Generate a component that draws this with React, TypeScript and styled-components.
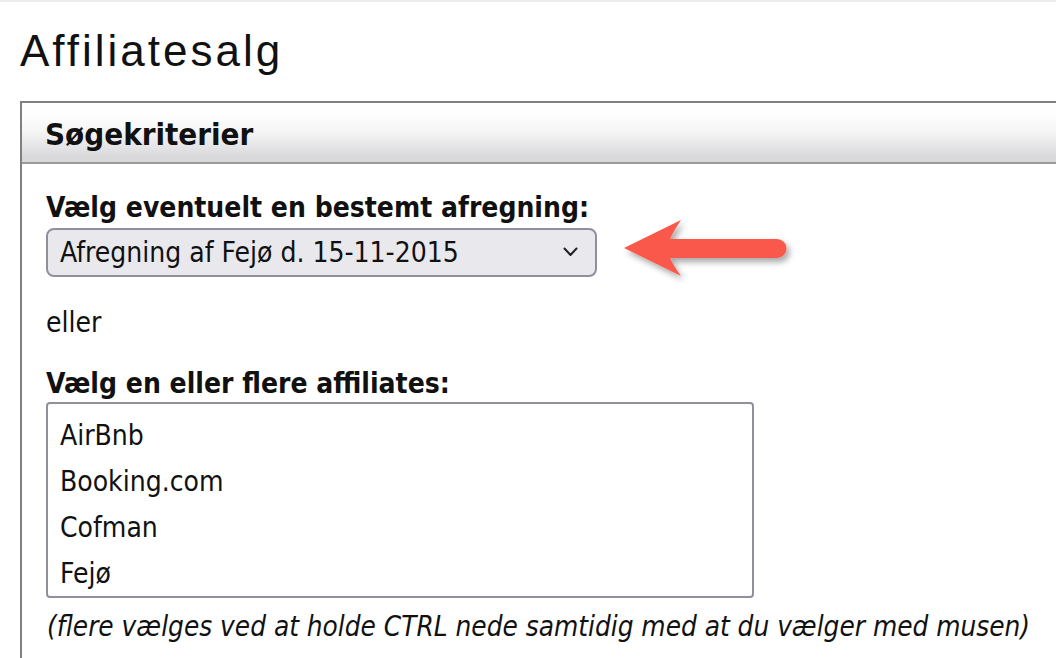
import React from 'react';
import styled, { createGlobalStyle } from 'styled-components';

const GlobalStyle = createGlobalStyle`
	html, body {
		margin: 0;
		padding: 0;
		background: #ffffff;
		overflow: hidden;
	}
	body {
		font-family: 'DejaVu Sans', Verdana, sans-serif;
		font-stretch: condensed;
		color: #111111;
	}
`;

const Page = styled.div`
	width: 1056px;
	height: 658px;
	border-top: 2px solid #ececec;
	box-sizing: border-box;
	padding-left: 20px;
	overflow: hidden;
`;

const Title = styled.h1`
	margin: 0;
	padding-top: 21px;
	height: 78px;
	font-family: 'Liberation Sans', Arial, sans-serif;
	font-stretch: normal;
	font-weight: 400;
	font-size: 44px;
	line-height: 56px;
	letter-spacing: 3px;
	color: #111111;
`;

const Panel = styled.section`
	width: 1100px;
	border-top: 2px solid #808080;
	border-left: 2px solid #808080;
`;

const PanelHeader = styled.div`
	height: 59px;
	border-bottom: 2px solid #9a9a9a;
	background: linear-gradient(
		to bottom,
		#ffffff 0%,
		#fdfdfd 25%,
		#f4f4f4 50%,
		#e4e4e6 75%,
		#d8d8da 92%,
		#d8d8da 100%
	);
	display: flex;
	align-items: center;
	padding-left: 23px;

	h2 {
		margin: 0;
		font-size: 31px;
		font-weight: 700;
		line-height: 34px;
		padding-top: 3px;
		color: #111111;
	}
`;

const PanelBody = styled.div`
	padding: 30px 0 40px 24px;
	display: flex;
	flex-direction: column;
	align-items: flex-start;
`;

const Label = styled.div<{ $gap: number }>`
	font-size: 28px;
	font-weight: 700;
	line-height: 28px;
	margin-bottom: ${({ $gap }) => $gap}px;
`;

const Row = styled.div`
	display: flex;
	align-items: center;
	gap: 22px;
`;

const SelectBox = styled.div`
	position: relative;
	width: 551px;
	height: 49px;
	box-sizing: border-box;
	border: 2px solid #8f8f9d;
	border-radius: 8px;
	background: #e9e9ed;
	display: flex;
	align-items: center;
	padding-left: 12px;
	font-size: 28px;
	color: #111111;
`;

const Chevron = styled.svg`
	position: absolute;
	right: 17px;
	top: 50%;
	margin-top: -6px;
`;

const ArrowSvg = styled.svg`
	margin: -16px 0;
`;

const Or = styled.div`
	font-size: 28px;
	line-height: 30px;
	margin: 31px 0 32px;
`;

const ListBox = styled.div`
	width: 708px;
	height: 196px;
	box-sizing: border-box;
	border: 2px solid #8f8f9d;
	border-radius: 4px;
	padding: 9px 0 0 12px;
	display: flex;
	flex-direction: column;
`;

const Option = styled.div`
	font-size: 28px;
	line-height: 46px;
	height: 46px;
`;

const Hint = styled.div`
	font-size: 27.7px;
	font-style: italic;
	line-height: 30px;
	margin-top: 14px;
	margin-left: 1px;
	white-space: nowrap;
`;

function ArrowMark(): React.ReactElement {
	return (
		<ArrowSvg width="180" height="80" viewBox="0 0 180 80">
			<defs>
				<filter id="shadow" x="-20%" y="-30%" width="140%" height="170%">
					<feDropShadow dx="3" dy="4" stdDeviation="3" floodColor="#000" floodOpacity="0.35" />
				</filter>
			</defs>
			<path
				d="M5 35 L62 7 Q54 19 51 26 L158 26 A9.5 9.5 0 0 1 158 45 L51 45 Q54 52 62 63 Z"
				fill="#f9594b"
				filter="url(#shadow)"
			/>
		</ArrowSvg>
	);
}

const affiliates = ['AirBnb', 'Booking.com', 'Cofman', 'Fejø'];

export default function App(): React.ReactElement {
	return (
		<Page>
			<GlobalStyle />
			<Title>Affiliatesalg</Title>
			<Panel>
				<PanelHeader>
					<h2>Søgekriterier</h2>
				</PanelHeader>
				<PanelBody>
					<Label $gap={6}>Vælg eventuelt en bestemt afregning:</Label>
					<Row>
						<SelectBox>
							Afregning af Fejø d. 15-11-2015
							<Chevron width="15" height="10" viewBox="0 0 15 10">
								<path d="M1.5 1.5 L7.5 8 L13.5 1.5" fill="none" stroke="#222" strokeWidth="2" strokeLinecap="round" strokeLinejoin="round" />
							</Chevron>
						</SelectBox>
						<ArrowMark />
					</Row>
					<Or>eller</Or>
					<Label $gap={4}>Vælg en eller flere affiliates:</Label>
					<ListBox>
						{affiliates.map((name) => (
							<Option key={name}>{name}</Option>
						))}
					</ListBox>
					<Hint>(flere vælges ved at holde CTRL nede samtidig med at du vælger med musen)</Hint>
				</PanelBody>
			</Panel>
		</Page>
	);
}
